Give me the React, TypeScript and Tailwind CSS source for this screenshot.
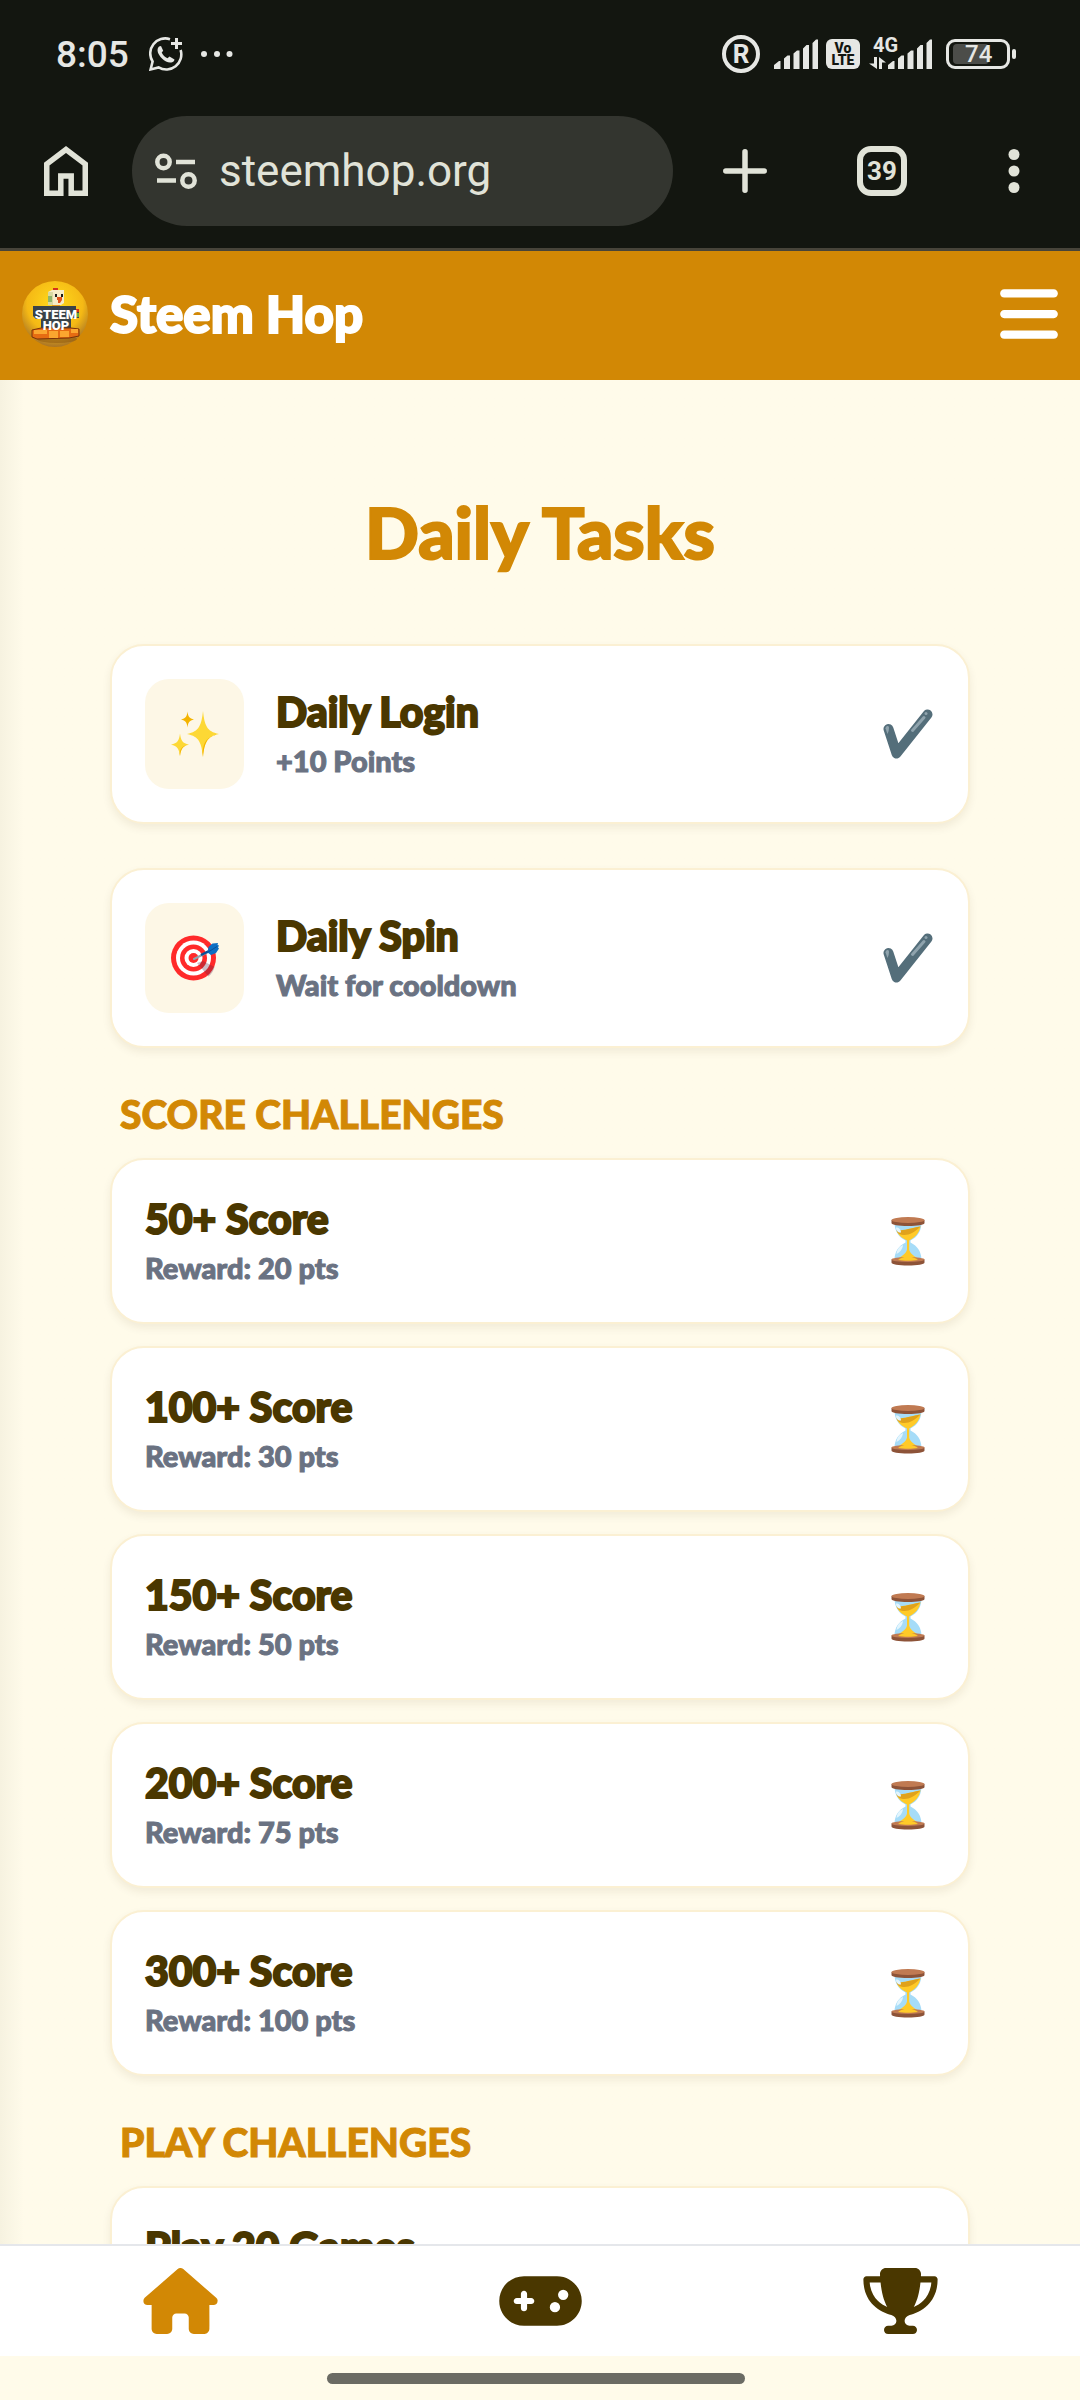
import type { ReactNode } from 'react'
import { FaBars, FaGamepad, FaHouse, FaTrophy } from 'react-icons/fa6'

interface Challenge {
  id: string
  title: string
  reward: string
}

interface DailyTask {
  id: string
  title: string
  note: string
  icon: ReactNode
}

const scoreChallenges: Challenge[] = [
  { id: 's50', title: '50+ Score', reward: 'Reward: 20 pts' },
  { id: 's100', title: '100+ Score', reward: 'Reward: 30 pts' },
  { id: 's150', title: '150+ Score', reward: 'Reward: 50 pts' },
  { id: 's200', title: '200+ Score', reward: 'Reward: 75 pts' },
  { id: 's300', title: '300+ Score', reward: 'Reward: 100 pts' }
]

const playChallenges: Challenge[] = [
  { id: 'p20', title: 'Play 20 Games', reward: 'Reward: 20 pts' }
]

const dailyTasks: DailyTask[] = [
  { id: 'login', title: 'Daily Login', note: '+10 Points', icon: <Sparkles /> },
  { id: 'spin', title: 'Daily Spin', note: 'Wait for cooldown', icon: <Target /> }
]

function Sparkles() {
  return (
    <svg viewBox="0 0 48 46" className="h-[46px] w-12">
      <path d="M32 0c1.600 14 3.500 20.500 16 23-12.500 2.500-14.400 9-16 23-1.600-14-3.500-20.500-16-23C28.500 20.500 30.400 14 32 0Z" fill="#fdd835" />
      <path d="M48 23c-12.500 2.500-14.400 9-16 23l-.6-5c1.500-10 4-15.500 16.600-18Z" fill="#f4b400" />
      <path d="M9 22.500c.9 7 2.500 9.800 9 11.200-6.500 1.400-8.100 4.200-9 11.200-.9-7-2.500-9.800-9-11.200 6.500-1.400 8.100-4.200 9-11.200Z" fill="#fdd835" />
      <path d="M18 33.700c-6.500 1.400-8.100 4.200-9 11.200l-.4-2.500c.6-5 3-7.700 9.400-8.700Z" fill="#f4b400" />
      <path d="M16.500.5c.6 5 1.800 7 6.500 8-4.700 1-5.900 3-6.500 8-.6-5-1.800-7-6.500-8 4.700-1 5.900-3 6.500-8Z" fill="#f4b400" />
    </svg>
  )
}

function Target() {
  return (
    <svg viewBox="0 0 48 46" className="h-[46px] w-12">
      <circle cx="22.500" cy="23" r="22.500" fill="#ff2a2a" />
      <circle cx="22.500" cy="23" r="17.500" fill="#fff" />
      <circle cx="22.500" cy="23" r="13.500" fill="#ff2a2a" />
      <circle cx="22.500" cy="23" r="9" fill="#fff" />
      <circle cx="22.500" cy="23" r="5" fill="#ff2a2a" />
      <path d="m26 28 11.500 13.500c3-2.500 5-5.500 6-9.500L32 26Z" fill="#5a2045" opacity=".3" />
      <path d="M23 24 37 17" stroke="#90a4ae" strokeWidth="2" strokeLinecap="round" />
      <path d="m30 20 8-4" stroke="#0a4f96" strokeWidth="2.500" />
      <path d="m36.500 17.500 1-5.500 4-3.500 5.500-.5-.5 2 1.500.5-1 2 1 1-3 4.500-5 2Z" fill="#0c6fc4" />
      <path d="m36.500 17.500 9.500-6" stroke="#0a4f96" strokeWidth="1" />
    </svg>
  )
}

function DoneMark() {
  return (
    <svg role="img" aria-label="Done" viewBox="0 0 50 50" className="mr-0.5 h-[50px] w-[50px]">
      <path d="m5.500 20 8 24.500L44.500 5.500" fill="none" stroke="#546e7a" strokeWidth="10" strokeLinecap="round" strokeLinejoin="round" />
      <path d="M29.500 21.500 41 8.500" stroke="#8fa3ad" strokeWidth="3" strokeLinecap="round" />
      <circle cx="43" cy="4.500" r="1.500" fill="#8fa3ad" />
      <path d="M2.500 19.500c0-3 3.500-3.500 3.500-.5 0 2-.5 4-1.500 6Z" fill="#8fa3ad" />
    </svg>
  )
}

function Hourglass() {
  return (
    <svg role="img" aria-label="In progress" viewBox="0 0 34 50" className="mr-2.5 h-[50px] w-[34px]">
      <path d="M3.500 6h27c0 9-4 15-11 18.500v2C26.500 30 30.500 36 30.500 44h-27c0-8 4-14 11-17.500v-2C7.500 21 3.500 15 3.500 6Z" fill="#a6dcf8" />
      <path d="M5.500 14.500C12 15 20 12 29.500 10.500 28 17.500 24 21.500 18.200 24.500v9c1 5 6 7 11 10.500H5c4.500-3.500 10-5.500 11-10.500v-9C11 22 7 19 5.500 14.500Z" fill="#ffca28" />
      <path d="M5.500 14.500C12 15 20 12 29.500 10.500c-5 5-11 8.500-16 8.500-4 0-6.500-1-8-4.500Z" fill="#e0a21b" />
      <path d="M5.500 38c.5-4.500 2.500-7 6.500-9-.5 4-3 7.500-6.500 9ZM5 11.500c3 0 5 2 5 5-3 .5-5-2-5-5Z" fill="#e3f5fd" />
      <path d="M.5 4h33v3c0 2-7 3-16.500 3S.5 9 .5 7ZM.5 43.500h33v3c0 2-7 3-16.500 3s-16.500-1-16.500-3Z" fill="#8d5338" />
      <ellipse cx="17" cy="4" rx="16.500" ry="3" fill="#c07a52" />
      <ellipse cx="17" cy="43.500" rx="16.500" ry="2.500" fill="#c07a52" />
      <path d="M7 44c3-2 6-3.500 10-3.500s7 1.500 10 3.500c-5 1-15 1-20 0Z" fill="#ffca28" />
    </svg>
  )
}

function SignalBars() {
  return (
    <svg viewBox="0 0 44 30" className="h-[30px] w-11" fill="currentColor">
      <path d="M0 30v-4l5-4h1.500v8ZM10 30V19.500l3.500-3H16V30ZM19.500 30V14.500l3.500-3h2.500V30ZM29 30V9.500l3.500-3.500h2.500v24ZM38.500 30V4L42 .5h2V30Z" />
    </svg>
  )
}

function StatusBar() {
  return (
    <div className="flex h-[108px] items-center justify-between pr-16 pl-14 text-[#e6e7e4]">
      <div className="flex items-center">
        <span className="text-[37px] leading-none font-medium">8:05</span>
        <svg viewBox="0 0 34 34" className="ml-5 h-[34px] w-[34px]" fill="none" stroke="currentColor" strokeWidth="2.600">
          <path d="M21 2.200A15 15 0 0 0 3.600 24.500L1.600 32.400l8-2A15 15 0 0 0 31.600 13" />
          <path d="M27.500 1v11M22 6.500h11" strokeWidth="3" />
          <path d="M10 9.500c-3 3-1 8 3 12s9 5.500 12 2.500l.5-1.500-5-3-2 1.800c-2.500-1-4.800-3.300-5.800-5.800l1.500-1.800-2.200-4.800Z" fill="currentColor" stroke="none" />
        </svg>
        <svg viewBox="0 0 32 6" className="ml-[18px] h-1.5 w-8" fill="currentColor">
          <circle cx="3" cy="3" r="3" />
          <circle cx="16" cy="3" r="3" />
          <circle cx="28.500" cy="3" r="3" />
        </svg>
      </div>
      <div className="flex items-center">
        <span className="flex h-[38px] w-[38px] items-center justify-center rounded-full border-4 border-current text-[26px] leading-none font-bold">R</span>
        <span className="ml-3.5 flex"><SignalBars /></span>
        <span className="ml-2 flex h-[30px] w-[34px] flex-col items-center justify-center rounded-md bg-[#e6e7e4] text-[14px] leading-[12px] font-black text-[#131610]">
          <span>Vo</span>
          <span>LTE</span>
        </span>
        <span className="relative ml-[9px] flex pl-[19px]">
          <span className="absolute -top-1 left-1 text-xl leading-5 font-bold">4G</span>
          <svg viewBox="0 0 18 12" className="absolute bottom-0 left-0 h-3 w-[18px]" fill="currentColor">
            <path d="M5 0h3v12L0 6.500h5ZM10 12V0l7 5.500h-4V12Z" />
          </svg>
          <SignalBars />
        </span>
        <span className="ml-3.5 flex items-center gap-0.5">
          <span className="flex h-[30px] w-16 items-center rounded-[9px] border-3 border-current p-1">
            <span className="flex h-5 w-9 items-center rounded-sm bg-[#4c4d49] pl-3 text-2xl leading-none font-medium">74</span>
          </span>
          <span className="h-2.5 w-1 rounded-full bg-current" />
        </span>
      </div>
    </div>
  )
}

function BrowserBar() {
  return (
    <div className="flex items-center border-b-3 border-[#47443a] pt-2 pr-[60px] pb-[22px] pl-11 text-[#e1e3d8]">
      <button aria-label="Home" className="shrink-0">
        <svg viewBox="0 0 44 50" className="h-[50px] w-11" fill="none" stroke="currentColor" strokeWidth="5.500">
          <path d="M2.750 47.250V18L22 3.500 41.250 18v29.250H27.200V30H16.800v17.250Z" />
        </svg>
      </button>
      <div className="ml-11 flex h-[110px] flex-1 items-center rounded-full bg-[#33352f] pl-[23px]">
        <svg viewBox="0 0 42 36" className="h-9 w-[42px]" fill="none" stroke="currentColor" strokeWidth="4.500">
          <circle cx="8.500" cy="9" r="6.200" />
          <circle cx="33.500" cy="27.500" r="6.200" />
          <path d="M21 9h19M2 27.500h19" />
        </svg>
        <input
          aria-label="Address"
          readOnly
          value="steemhop.org"
          className="ml-[22px] w-0 flex-1 bg-transparent text-[44px] leading-none outline-none"
        />
      </div>
      <button aria-label="New tab" className="ml-[50px]">
        <svg viewBox="0 0 44 44" className="h-11 w-11" stroke="currentColor" strokeWidth="5.500" strokeLinecap="round">
          <path d="M22 2.800v38.400M2.800 22h38.400" />
        </svg>
      </button>
      <button
        aria-label="39 open tabs"
        className="ml-[90px] flex h-[50px] w-[50px] items-center justify-center rounded-[14px] border-6 border-current text-[26px] leading-none font-bold"
      >
        39
      </button>
      <button aria-label="More" className="ml-[101px]">
        <svg viewBox="0 0 12 44" className="h-11 w-3" fill="currentColor">
          <circle cx="6" cy="5.500" r="5.500" />
          <circle cx="6" cy="22" r="5.500" />
          <circle cx="6" cy="38.500" r="5.500" />
        </svg>
      </button>
    </div>
  )
}

function Logo() {
  return (
    <svg viewBox="0 0 66 66" className="h-[66px] w-[66px]" role="img" aria-label="Steem Hop logo">
      <defs>
        <radialGradient id="ball" cx=".5" cy=".35" r=".65">
          <stop offset="0" stopColor="#ffdc1c" />
          <stop offset=".65" stopColor="#f5b915" />
          <stop offset="1" stopColor="#a97426" />
        </radialGradient>
      </defs>
      <circle cx="33" cy="33" r="33" fill="url(#ball)" />
      <ellipse cx="35" cy="58" rx="20" ry="4" fill="#8a5410" opacity=".5" />
      <path d="M31 7h5v3h-5Z" fill="#d4311c" />
      <path d="M30 23h8v5h-8Z" fill="#e79a1a" />
      <path d="M26 11l4-2h12v13l-3 2H26Z" fill="#f6ecc6" />
      <path d="M26 11h5v13h-5Z" fill="#d8d9a0" />
      <path d="M26 15h4v6h-4Z" fill="#8fb56a" />
      <path d="M33 13h2v3h-2ZM39 13h2v3h-2Z" fill="#1d1d1b" />
      <path d="M35 16h5v3l-2 3h-2v-3h-1Z" fill="#e2541a" />
      <path d="M11 25h43v3h3v9h-8v12H22l-3-2v-9h-5l-3-3Z" fill="#3a4349" />
      <path d="M54 28h3v3h-3Z" fill="#d4311c" />
      <path d="M54 32h3v4h-3Z" fill="#67a83c" />
      <path d="M10 49l9-2h30l8 1v7l-10 2-32 1-5-2Z" fill="#e66c12" stroke="#7a3209" />
      <path d="M12 49h13v4H12ZM27 50h9v7h-9ZM38 50h9v6h-9ZM49 48h7v4h-7Z" fill="#fba62f" />
      <text x="34" y="38" textAnchor="middle" fontFamily="Roboto" fontWeight="900" fontSize="13" fill="#fff">STEEM</text>
      <text x="34" y="49" textAnchor="middle" fontFamily="Roboto" fontWeight="900" fontSize="13" fill="#fff">HOP</text>
    </svg>
  )
}

function TaskText({ title, note }: { title: string; note: string }) {
  return (
    <div className="flex flex-1 flex-col gap-2">
      <h3 className="text-[41px] leading-[46px] font-black text-[#4a3700] [-webkit-text-stroke:2px]">{title}</h3>
      <p className="text-[29px] leading-9 font-black text-gray-500 [-webkit-text-stroke:1px]">{note}</p>
    </div>
  )
}

function ChallengeSection({ title, items }: { title: string; items: Challenge[] }) {
  return (
    <section>
      <h2 className="mt-[46px] mb-6 px-2.5 text-[39px] leading-10 font-black text-[#d28805] uppercase [-webkit-text-stroke:1px]">{title}</h2>
      <ul className="flex flex-col gap-[22px]">
        {items.map((item) => (
          <li
            key={item.id}
            className="flex items-center rounded-[34px] border-2 border-[#fbf0d3] bg-white px-[33px] py-9 shadow-[0_4px_8px_rgba(74,55,0,0.08)]"
          >
            <TaskText title={item.title} note={item.reward} />
            <Hourglass />
          </li>
        ))}
      </ul>
    </section>
  )
}

export default function App() {
  return (
    <div className="flex h-screen flex-col overflow-hidden bg-[#fffbea] font-['Lato',sans-serif]">
      <div className="shrink-0 bg-[#131610] font-['Roboto',sans-serif]">
        <StatusBar />
        <BrowserBar />
      </div>

      <header className="flex h-[129px] shrink-0 items-center justify-between bg-[#d28805] px-[22px] pb-1 text-white">
        <a href="#" className="flex items-center gap-[22px]">
          <Logo />
          <span className="text-[51px] leading-none font-black [-webkit-text-stroke:2px]">Steem Hop</span>
        </a>
        <button aria-label="Menu">
          <FaBars className="h-[66px] w-[58px]" />
        </button>
      </header>

      <main className="min-h-0 flex-1 overflow-hidden bg-linear-to-r from-[#f6f2e0] to-[#fffbea] to-[24px] px-[110px] pt-28">
        <h1 className="mb-[72px] text-center text-[71px] leading-20 font-black text-[#d28805] [-webkit-text-stroke:2px]">Daily Tasks</h1>
        <ul className="flex flex-col gap-11">
          {dailyTasks.map((task) => (
            <li
              key={task.id}
              className="flex items-center rounded-[34px] border-2 border-[#fbf0d3] bg-white p-[33px] shadow-[0_4px_8px_rgba(74,55,0,0.08)]"
            >
              <div className="mr-8 flex h-[110px] w-[99px] items-center justify-center rounded-3xl bg-[#fdf7e6]">
                {task.icon}
              </div>
              <TaskText title={task.title} note={task.note} />
              <DoneMark />
            </li>
          ))}
        </ul>
        <ChallengeSection title="Score Challenges" items={scoreChallenges} />
        <ChallengeSection title="Play Challenges" items={playChallenges} />
      </main>

      <nav className="grid h-28 shrink-0 grid-cols-3 items-center justify-items-center border-t-2 border-gray-200 bg-white text-[#4a3700]">
        <a href="#home" aria-label="Home" className="text-[#d28805]">
          <FaHouse className="h-[66px] w-[75px]" />
        </a>
        <a href="#play" aria-label="Play">
          <FaGamepad className="h-[66px] w-[83px]" />
        </a>
        <a href="#ranking" aria-label="Ranking">
          <FaTrophy className="h-[66px] w-[75px]" />
        </a>
      </nav>
      <div className="flex h-11 shrink-0 items-center justify-center pr-2">
        <div className="h-[11px] w-[418px] rounded-full bg-[#6b6b64]" />
      </div>
    </div>
  )
}
